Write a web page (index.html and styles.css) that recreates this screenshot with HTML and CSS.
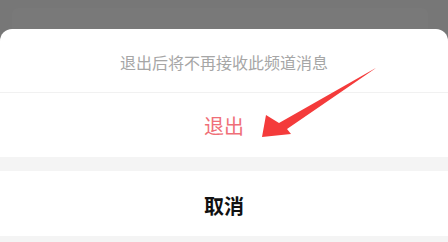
FILE: index.html
```html
<!DOCTYPE html>
<html lang="zh">
<head>
<meta charset="utf-8">
<link rel="stylesheet" href="styles.css">
</head>
<body>
<div class="screen">
  <div class="backdrop"><div class="ghost-card"></div></div>
  <div class="sheet">
    <div class="title">退出后将不再接收此频道消息</div>
    <div class="action exit">退出</div>
    <div class="gap"></div>
    <div class="action cancel">取消</div>
    <div class="bottom"></div>
  </div>
  <svg class="arrow" width="448" height="242" viewBox="0 0 448 242">
    <polygon points="376,68 287,129 291,134 262,137 266,115 279,123 374,69" fill="#f43b3b"/>
  </svg>
</div>
</body>
</html>
```
FILE: styles.css
```css
html, body {
  margin: 0;
  padding: 0;
}
body {
  width: 448px;
  height: 242px;
  overflow: hidden;
  background: #777777;
  font-family: "Noto Sans CJK SC", "Noto Sans", sans-serif;
}
.screen {
  position: relative;
  width: 448px;
  height: 242px;
  display: flex;
  flex-direction: column;
}
.backdrop {
  height: 29px;
  padding: 8px 20px 0 12px;
  box-sizing: border-box;
  display: flex;
}
.ghost-card {
  flex: 1;
  background: #797979;
  border-radius: 6px 6px 0 0;
}
.sheet {
  flex: 1;
  background: #ffffff;
  border-radius: 12px 12px 0 0;
  display: flex;
  flex-direction: column;
}
.title {
  height: 64px;
  box-sizing: border-box;
  border-bottom: 1px solid #f1f1f1;
  display: flex;
  align-items: center;
  justify-content: center;
  padding-top: 2px;
  font-size: 16px;
  color: #a6a6a6;
}
.action {
  display: flex;
  align-items: center;
  justify-content: center;
  font-size: 20px;
}
.exit {
  height: 64px;
  color: #ef6f78;
}
.gap {
  height: 14px;
  background: #f4f4f4;
}
.cancel {
  height: 65px;
  padding-top: 4px;
  box-sizing: border-box;
  color: #111111;
  font-weight: bold;
}
.bottom {
  flex: 1;
  background: #f4f4f4;
}
.arrow {
  position: absolute;
  left: 0;
  top: 0;
}
```
